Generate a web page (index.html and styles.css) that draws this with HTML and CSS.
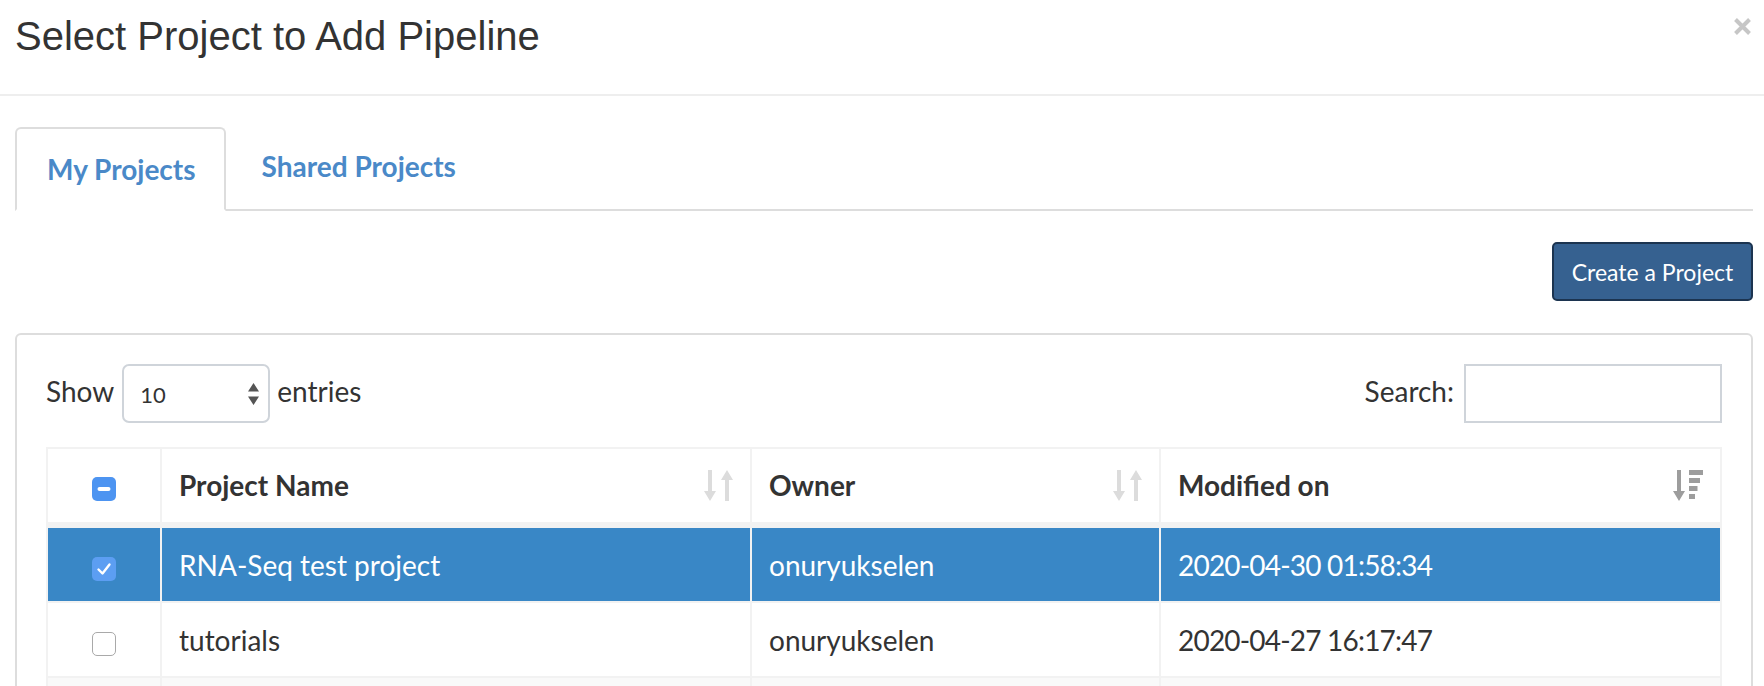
FILE: index.html
```html
<!DOCTYPE html>
<html lang="en">
<head>
<meta charset="utf-8">
<title>Select Project to Add Pipeline</title>
<link rel="stylesheet" href="styles.css">
</head>
<body>
<div class="modal">
  <div class="modal-header">
    <h4 class="modal-title">Select Project to Add Pipeline</h4>
    <button class="close" type="button" aria-label="Close">
      <svg width="19" height="19" viewBox="0 0 19 19"><path d="M2.5 2.5 L16.5 16.5 M16.5 2.5 L2.5 16.5" stroke="#c6c6c6" stroke-width="4" stroke-linecap="butt"/></svg>
    </button>
  </div>
  <div class="modal-body">
    <ul class="nav-tabs">
      <li class="tab active"><a class="tab-link">My Projects</a></li>
      <li class="tab"><a class="tab-link">Shared Projects</a></li>
    </ul>
    <div class="toolbar">
      <button class="btn-create" type="button">Create a Project</button>
    </div>
    <div class="panel">
      <div class="dt-controls">
        <label class="dt-length"><span class="lbl">Show</span>
          <span class="select">10
            <svg class="select-arrows" width="11" height="22" viewBox="0 0 11 22"><path d="M5.5 0 L11 8.5 L0 8.5 Z M0 13.5 L11 13.5 L5.5 22 Z" fill="#555"/></svg>
          </span>
          <span class="lbl">entries</span></label>
        <label class="dt-filter"><span class="lbl">Search:</span> <span class="search"></span></label>
      </div>
      <table class="dt">
        <colgroup>
          <col class="c-check"><col class="c-name"><col class="c-owner"><col class="c-date">
        </colgroup>
        <thead>
          <tr>
            <th class="check-cell"><span class="cb cb-partial"><svg width="24" height="24" viewBox="0 0 24 24"><rect x="5.5" y="10" width="13" height="4" rx="2" fill="#fff"/></svg></span></th>
            <th><div class="th-inner"><span>Project Name</span>
              <svg class="sort" width="30" height="31" viewBox="0 0 30 31"><path d="M4 0 H8 V21 H12 L6 31 L0 21 H4 Z M21 31 H25 V10 H29 L23 0 L17 10 H21 Z" fill="#dcdcdc"/></svg></div></th>
            <th><div class="th-inner"><span>Owner</span>
              <svg class="sort" width="30" height="31" viewBox="0 0 30 31"><path d="M4 0 H8 V21 H12 L6 31 L0 21 H4 Z M21 31 H25 V10 H29 L23 0 L17 10 H21 Z" fill="#dcdcdc"/></svg></div></th>
            <th><div class="th-inner"><span>Modified on</span>
              <svg class="sort" width="31" height="31" viewBox="0 0 31 31"><path d="M4 0 H8 V21 H12 L6 31 L0 21 H4 Z" fill="#9d9d9d"/><rect x="16" y="0" width="14" height="5" fill="#9d9d9d"/><rect x="16" y="8" width="11" height="5" fill="#9d9d9d"/><rect x="16" y="16" width="8.5" height="5" fill="#9d9d9d"/><rect x="16" y="24" width="6" height="5" fill="#9d9d9d"/></svg></div></th>
          </tr>
        </thead>
        <tbody>
          <tr class="row selected">
            <td class="check-cell"><span class="cb cb-checked"><svg width="24" height="24" viewBox="0 0 24 24"><path d="M6.5 12.5 L10.5 16.5 L17.5 7.5" fill="none" stroke="#fff" stroke-width="2.4" stroke-linecap="round" stroke-linejoin="round"/></svg></span></td>
            <td>RNA-Seq test project</td>
            <td>onuryukselen</td>
            <td class="date">2020-04-30 01:58:34</td>
          </tr>
          <tr class="row">
            <td class="check-cell"><span class="cb cb-empty"></span></td>
            <td>tutorials</td>
            <td>onuryukselen</td>
            <td class="date">2020-04-27 16:17:47</td>
          </tr>
          <tr class="row striped">
            <td class="check-cell"></td><td></td><td></td><td></td>
          </tr>
        </tbody>
      </table>
    </div>
  </div>
</div>
</body>
</html>
```

FILE: styles.css
```css
* { box-sizing: border-box; }
html, body {
  margin: 0;
  padding: 0;
  background: #fff;
  overflow: hidden;
}
body {
  font-family: "Lato", "Liberation Sans", sans-serif;
  color: #333;
}

.modal { width: 1764px; }

.modal-header {
  display: flex;
  justify-content: space-between;
  align-items: flex-start;
  height: 96px;
  padding: 14px 12px 0 15px;
  border-bottom: 2px solid #eeeeee;
}
.modal-title {
  margin: 0;
  font-family: "Liberation Sans", Arial, sans-serif;
  font-weight: 400;
  font-size: 40px;
  line-height: 44px;
  color: #333;
}
.close {
  margin: 3px 0 0 0;
  padding: 0;
  border: 0;
  background: transparent;
  display: flex;
}

.modal-body {
  padding: 31px 11px 0 15px;
}

.nav-tabs {
  display: flex;
  margin: 0;
  padding: 0;
  list-style: none;
  border-bottom: 2px solid #dddddd;
}
.tab {
  margin-bottom: -2px;
  margin-right: 2px;
}
.tab-link {
  display: block;
  height: 84px;
  padding: 20px 32px 0 32px;
  border: 2px solid transparent;
  border-radius: 6px 6px 0 0;
  font-size: 28px;
  line-height: 34px;
  font-weight: 700;
  color: #4a89c8;
}
.tab.active .tab-link {
  padding: 23px 28px 0 30px;
  border-color: #dddddd;
  border-bottom-color: #fff;
  background: #fff;
}

.toolbar {
  display: flex;
  justify-content: flex-end;
  margin-top: 31px;
}
.btn-create {
  width: 201px;
  height: 59px;
  padding: 0;
  background: #366190;
  border: 2px solid #1c3450;
  border-radius: 5px;
  color: #fff;
  font-family: "Lato", sans-serif;
  font-size: 23px;
  font-weight: 400;
}

.panel {
  margin-top: 32px;
  border: 2px solid #dddddd;
  border-radius: 6px;
  padding: 29px 29px 0 29px;
}

.dt-controls {
  display: flex;
  justify-content: space-between;
  align-items: center;
  height: 59px;
}
.dt-length, .dt-filter {
  display: flex;
  align-items: center;
  font-size: 28px;
  color: #333;
}
.lbl { margin-bottom: 6px; }
.select {
  display: flex;
  align-items: center;
  justify-content: space-between;
  width: 148px;
  height: 59px;
  margin: 0 7px 0 8px;
  padding: 2px 9px 0 16px;
  border: 2px solid #cfd4da;
  border-radius: 7px;
  font-size: 22px;
  color: #333;
}
.select-arrows { margin-top: -2px; }
.search {
  display: block;
  width: 258px;
  height: 59px;
  margin-left: 10px;
  border: 2px solid #cfd4da;
}

.dt {
  width: 100%;
  margin-top: 24px;
  border-collapse: collapse;
  font-size: 28px;
}
.c-check { width: 114px; }
.c-name { width: 590px; }
.c-owner { width: 409px; }

.dt th, .dt td {
  border: 2px solid #f2f2f2;
  line-height: 34px;
  text-align: left;
  padding: 20px 16px 19px 17px;
}
.dt th {
  font-weight: 700;
  color: #333;
  padding-top: 19px;
  padding-bottom: 20px;
  border-bottom-width: 6px;
}
.th-inner {
  display: flex;
  justify-content: space-between;
  align-items: center;
}
.dt td { color: #333; }
.dt td.date { letter-spacing: -0.8px; }

.dt .check-cell {
  text-align: center;
  padding-left: 0;
  padding-right: 0;
}
.cb {
  display: inline-block;
  width: 24px;
  height: 24px;
  border-radius: 5px;
  vertical-align: middle;
  margin-top: 0;
}
.cb svg { display: block; }
.cb-partial { background: #4d94f1; }
.cb-checked { background: #5c9ef2; }
.cb-empty {
  background: #fff;
  border: 1.5px solid #a9a9a9;
}

.row.selected td {
  background: #3987c6;
  color: #fff;
}
.row.striped td {
  background: #f9f9f9;
  height: 73px;
}
```
